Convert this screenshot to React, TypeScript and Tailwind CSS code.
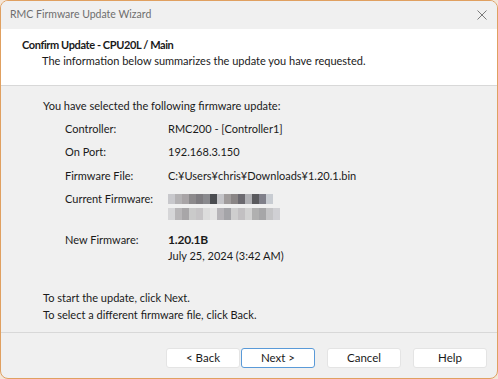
import { FC } from "react"

const blurTop = ["#c8c8cc", "#b4b2b4", "#a8a4a6", "#8c8a8c", "#7e7c80", "#8a8a8e", "#4a4c50", "#c4c4c8", "#a09c9c", "#8a8686", "#6c6a70", "#b0b0b4", "#5a5a5e", "#80808a", "#c8ccd2"]
const blurBottom = ["#d6d6d8", "#b8b6b8", "#a8a6a8", "#cacaca", "#c6c4c6", "#dcdcdc", "#e4e4e4", "#b6b4b8", "#a4a4a8", "#cecece", "#c2c0c2", "#d2d2d2", "#b0b0b0", "#a6a6a8", "#c4c4c6", "#d0d0d4"]

const Blurred: FC = () => (
  <div className="flex flex-col gap-[4px] pt-[3px]">
    <div className="flex">
      {blurTop.map((c, i) => (
        <span key={i} className="h-[10px] w-[7px]" style={{ background: c }} />
      ))}
    </div>
    <div className="flex">
      {blurBottom.map((c, i) => (
        <span key={i} className="h-[12px] w-[7px]" style={{ background: c }} />
      ))}
    </div>
  </div>
)

const Row: FC<{ label: string; children: React.ReactNode; className?: string }> = ({ label, children, className }) => (
  <div className={"flex " + (className ?? "")}>
    <div className="w-[103px] shrink-0">{label}</div>
    <div>{children}</div>
  </div>
)

const Btn: FC<{ label: string; primary?: boolean }> = ({ label, primary }) => (
  <button
    className={
      "h-[20px] w-[74px] bg-white text-[11.5px] text-[#1a1a1a] rounded-[3px] border leading-none " +
      (primary ? "border-[#5a9ad8]" : "border-[#e4e4e4]")
    }>
    {label}
  </button>
)

export default function App() {
  return (
    <div className="w-[498px] h-[379px] bg-[#f3e6d8]">
      <div
        className="w-[498px] h-[379px] rounded-[8px] border border-[#e0a060] bg-[#f0f0f0] overflow-hidden flex flex-col text-[11px] text-[#1a1a1a]"
        style={{ fontFamily: 'Lato, "Noto Sans", sans-serif' }}>
        <div className="h-[28px] shrink-0 flex items-center justify-between pl-[9px] pr-[10px] bg-[#f0f0f0]">
          <span className="text-[#6e6e6e] text-[10.5px]">RMC Firmware Update Wizard</span>
          <svg width="10" height="10" viewBox="0 0 10 10" stroke="#7a7a7a" strokeWidth="1">
            <path d="M0.5 0.5 L9.5 9.5 M9.5 0.5 L0.5 9.5" />
          </svg>
        </div>
        <div className="h-[57px] shrink-0 bg-white border-b border-[#d8d8d8] pl-[21px] pt-[8px] leading-[16px]">
          <div className="font-bold tracking-[-0.4px]">Confirm Update - CPU20L / Main</div>
          <div className="pl-[20px]">The information below summarizes the update you have requested.</div>
        </div>
        <div className="flex-1 pl-[42px] pt-[12px] leading-[16px]">
          <div>You have selected the following firmware update:</div>
          <div className="pl-[22px] flex flex-col">
            <Row label="Controller:" className="mt-[7px]">RMC200 - [Controller1]</Row>
            <Row label="On Port:" className="mt-[7px]">192.168.3.150</Row>
            <Row label="Firmware File:" className="mt-[8px]">C:¥Users¥chris¥Downloads¥1.20.1.bin</Row>
            <Row label="Current Firmware:" className="mt-[7px]">
              <Blurred />
            </Row>
            <Row label="New Firmware:" className="mt-[12px]">
              <div className="font-bold text-[12px] tracking-[-0.2px]">1.20.1B</div>
              <div>July 25, 2024 (3:42 AM)</div>
            </Row>
          </div>
          <div className="mt-[26px]">To start the update, click Next.</div>
          <div className="mt-[1px]">To select a different firmware file, click Back.</div>
        </div>
        <div className="h-[46px] shrink-0 border-t border-[#d8d8d8] flex items-start justify-end pr-[10px] pt-[15px]">
          <div className="flex">
            <Btn label="< Back" />
            <div className="w-[1px]" />
            <Btn label="Next >" primary />
            <div className="w-[12px]" />
            <Btn label="Cancel" />
            <div className="w-[12px]" />
            <Btn label="Help" />
          </div>
        </div>
      </div>
    </div>
  )
}
